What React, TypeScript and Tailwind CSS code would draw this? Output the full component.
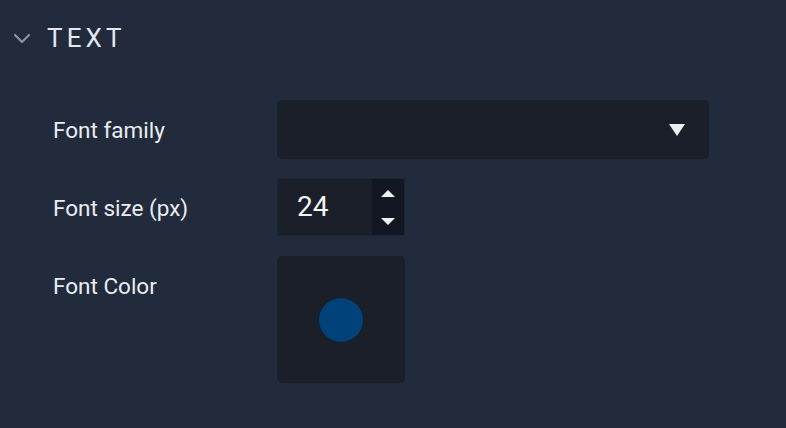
import { useState } from 'react';

function ChevronDown() {
    return (
        <svg width="18" height="12" viewBox="0 0 18 12" fill="none" className="shrink-0">
            <path d="M2 3l7 7 7-7" stroke="#8b93a1" strokeWidth="2.2" strokeLinecap="round" strokeLinejoin="round" />
        </svg>
    );
}

function Row({ label, children }: { label: string; children: React.ReactNode }) {
    return (
        <div className="flex items-start">
            <div className="w-[224px] shrink-0 text-[22.5px] leading-[60px] text-[#e9edf2]">{label}</div>
            {children}
        </div>
    );
}

export default function App() {
    const [size, setSize] = useState(24);

    return (
        <div
            className="w-[786px] h-[428px] bg-[#222b3b] overflow-hidden"
            style={{ fontFamily: 'Roboto, "Noto Sans", sans-serif' }}
        >
            <div className="flex items-center h-[76px] pl-[13px] gap-[16px]">
                <ChevronDown />
                <span className="text-[26px] tracking-[0.16em] text-[#e3e8ef]">TEXT</span>
            </div>

            <div className="flex flex-col pl-[53px] pt-[24px] gap-[18px]">
                <Row label="Font family">
                    <div className="w-[432px] h-[59px] rounded-[5px] bg-[#1a1f29] flex items-center justify-end pr-[24px]">
                        <svg width="16" height="12" viewBox="0 0 16 12">
                            <path d="M0 0h16L8 12z" fill="#eeeef2" />
                        </svg>
                    </div>
                </Row>

                <Row label="Font size (px)">
                    <div className="w-[128px] h-[58px] border border-[#1d2432] bg-[#1a1f29] flex">
                        <div className="flex-1 flex items-center pl-[19px] text-[28px] text-[#f2f4f7]">{size}</div>
                        <div className="w-[32px] bg-[#121723] flex flex-col items-center justify-center gap-[21px]">
                            <button onClick={() => setSize(size + 1)} className="block">
                                <svg width="14" height="7" viewBox="0 0 14 7">
                                    <path d="M0 7L7 0l7 7z" fill="#eef0f4" />
                                </svg>
                            </button>
                            <button onClick={() => setSize(size - 1)} className="block">
                                <svg width="14" height="7" viewBox="0 0 14 7">
                                    <path d="M0 0h14L7 7z" fill="#eef0f4" />
                                </svg>
                            </button>
                        </div>
                    </div>
                </Row>

                <Row label="Font Color">
                    <div className="w-[128px] h-[127px] rounded-[5px] bg-[#1a1f29] flex items-center justify-center">
                        <div className="w-[44px] h-[44px] rounded-full bg-[#01427a]" />
                    </div>
                </Row>
            </div>
        </div>
    );
}
